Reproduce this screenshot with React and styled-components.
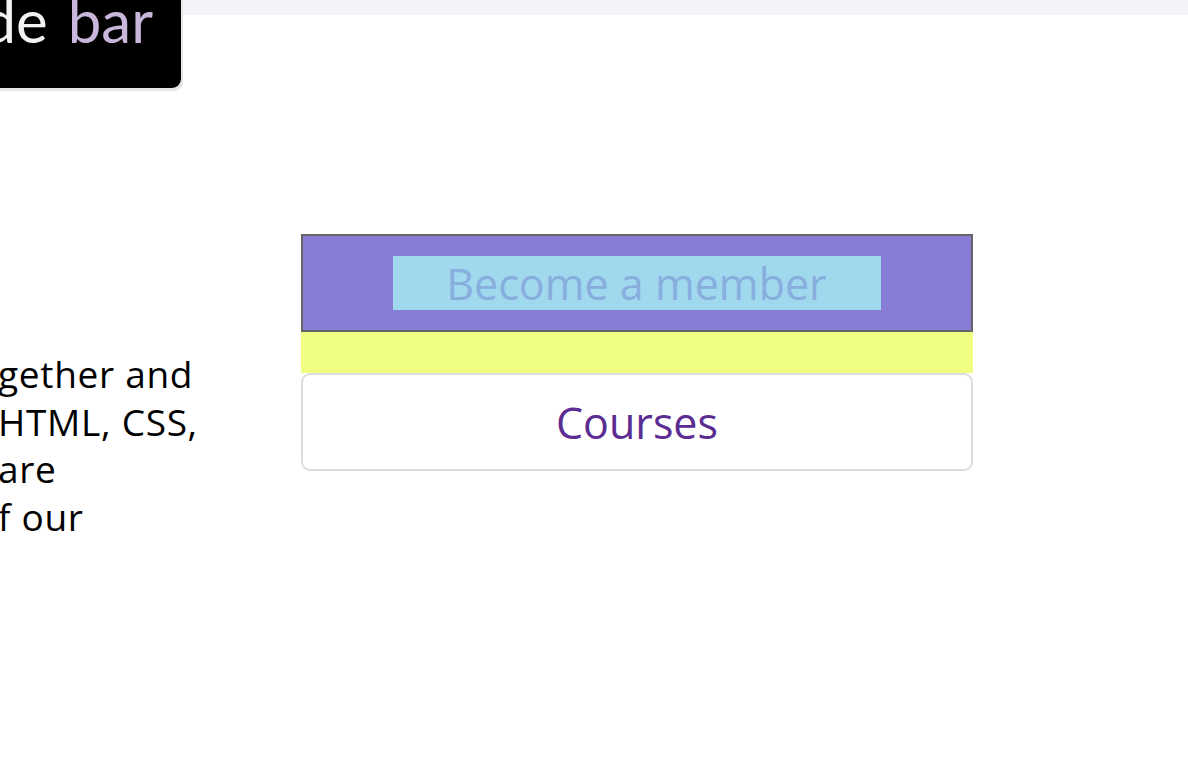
import React from 'react';
import styled, { createGlobalStyle } from 'styled-components';

const Global = createGlobalStyle`
  html, body { margin: 0; padding: 0; background: #fff; overflow: hidden; }
  body { font-family: "Open Sans", Lato, "Liberation Sans", sans-serif; color: #000; }
`;

const Page = styled.div`
  position: relative;
  width: 1188px;
  height: 758px;
  overflow: hidden;
`;

const TopBar = styled.div`
  height: 15px;
  background: #f4f3f8;
`;

const Badge = styled.div`
  position: absolute;
  top: -20px;
  left: -120px;
  width: 301px;
  height: 108px;
  background: #000;
  border-radius: 0 0 9px 0;
  box-shadow: 2px 3px 0 #e6e6e6;
  display: flex;
  align-items: flex-end;
  justify-content: flex-end;
  padding: 0 28px 38px 0;
  box-sizing: border-box;
  font-family: Lato, "Open Sans", sans-serif;
  font-size: 60px;
  line-height: 1;
  white-space: nowrap;
`;

const Word = styled.span`
  color: ${p => p.$tint || '#f2f2f2'};
  margin-left: ${p => p.$gap || 0}px;
`;

const Main = styled.div`
  display: grid;
  grid-template-columns: 301px 672px;
  align-items: start;
  padding-top: 219px;
`;

const Copy = styled.p`
  margin: 116px 0 0 -2px;
  font-size: 37px;
  letter-spacing: 0.7px;
  line-height: 47.5px;
  white-space: nowrap;
`;

const Stack = styled.div`
  display: flex;
  flex-direction: column;
`;

const Member = styled.div`
  height: 98px;
  border: 2px solid #666;
  background: #887dd6;
  box-sizing: border-box;
  display: flex;
  justify-content: center;
  align-items: center;
`;

const MemberLabel = styled.span`
  width: 488px;
  height: 54px;
  margin-left: -1px;
  background: #a0d8ee;
  color: #88aede;
  font-size: 43px;
  display: flex;
  align-items: center;
  justify-content: center;
`;

const Gap = styled.div`
  height: 41px;
  background: #f0fe82;
`;

const Courses = styled.div`
  height: 98px;
  border: 2px solid #dddddd;
  border-radius: 9px;
  box-sizing: border-box;
  background: #fff;
  color: #5b2c91;
  font-size: 43px;
  display: flex;
  align-items: center;
  justify-content: center;
`;

export default function App() {
  return (
    <>
      <Global />
      <Page>
        <TopBar />
        <Main>
          <Copy>
            gether and<br />
            HTML, CSS,<br />
            are<br />
            f our
          </Copy>
          <Stack>
            <Member>
              <MemberLabel>Become a member</MemberLabel>
            </Member>
            <Gap />
            <Courses>Courses</Courses>
          </Stack>
        </Main>
        <Badge>
          <Word>Hide</Word>
          <Word $tint="#c8b7da" $gap={20}>bar</Word>
        </Badge>
      </Page>
    </>
  );
}
